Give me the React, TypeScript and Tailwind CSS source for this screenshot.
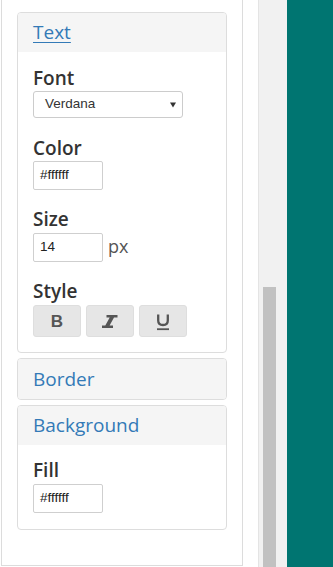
import React from "react";

const label = "block h-[20px] leading-[20px] text-[19px] font-semibold text-[#333] mb-[3px]";
const inputCls =
  "w-[70px] h-[29px] border border-[#cfcfcf] rounded-[2px] bg-white pl-[6px] flex items-center text-[13.5px] text-[#222] font-['Liberation_Sans',Arial,sans-serif]";

function ItalicIcon() {
  return (
    <svg width="16" height="13" viewBox="0 0 16 13" fill="#555">
      <path d="M4.5 0H15.5V2.6H12L7.6 10.4H11V13H0V10.4H3.3L7.7 2.6H4.5Z" />
    </svg>
  );
}

function UnderlineIcon() {
  return (
    <svg width="14" height="17" viewBox="0 0 14 17" fill="none" stroke="#555">
      <path d="M2.2 0.5V6.5Q2.2 11 7 11Q11.8 11 11.8 6.5V0.5" strokeWidth="2.3" />
      <path d="M1 15.2H13" strokeWidth="1.8" />
    </svg>
  );
}

function Header({ title, underline, h }: { title: string; underline?: boolean; h: string }) {
  return (
    <div className={`${h} bg-[#f5f5f5] pl-[15px] text-[19px] text-[#337ab7] rounded-t-[3px]`}>
      <span className={underline ? "underline underline-offset-[3px] decoration-1" : ""}>{title}</span>
    </div>
  );
}

const btn =
  "w-[48px] h-[32px] bg-[#e6e6e6] border border-[#dedede] rounded-[3px] flex items-center justify-center";

export default function App() {
  return (
    <div className="w-[333px] h-[567px] flex overflow-hidden bg-white font-['Open_Sans','Noto_Sans',sans-serif]">
      <div className="w-[259px] h-full border-r border-[#e4e4e4] pl-px">
        <div className="w-[242px] border-x border-b border-[#dcdcdc] pt-[12px] px-[15px] pb-[35px]">
          {/* Text card */}
          <div className="border border-[#dddddd] rounded-[4px]">
            <Header title="Text" underline h="h-[39px] leading-[39px]" />
            <div className="px-[15px] pt-[16px] pb-[15px]">
              <div className="mb-[20px]">
                <span className={label}>Font</span>
                <div className="w-[150px] h-[27px] border border-[#cccccc] rounded-[3px] bg-white flex items-center justify-between pl-[11px] pr-[6px] text-[13.5px] text-[#333] font-['Liberation_Sans',Arial,sans-serif]">
                  <span>Verdana</span>
                  <svg width="6" height="6" viewBox="0 0 6 6" fill="#333">
                    <path d="M0 0.5H6L3 5.5Z" />
                  </svg>
                </div>
              </div>
              <div className="mb-[19px]">
                <span className={label}>Color</span>
                <div className={inputCls}>#ffffff</div>
              </div>
              <div className="mb-[19px]">
                <span className={`${label} mb-[4px]`}>Size</span>
                <div className="flex items-center gap-[5px]">
                  <div className={inputCls}>14</div>
                  <span className="text-[18px] text-[#555] leading-[20px] -mt-[3px]">px</span>
                </div>
              </div>
              <div>
                <span className={`${label} mb-[4px]`}>Style</span>
                <div className="flex gap-[5px]">
                  <div className={btn}>
                    <span className="text-[17px] leading-none font-bold text-[#555] font-['Liberation_Sans',Arial,sans-serif]">B</span>
                  </div>
                  <div className={btn}>
                    <ItalicIcon />
                  </div>
                  <div className={btn}>
                    <span className="mt-[2px] flex">
                      <UnderlineIcon />
                    </span>
                  </div>
                </div>
              </div>
            </div>
          </div>

          {/* Border card */}
          <div className="mt-[5px] border border-[#dddddd] rounded-[4px]">
            <Header title="Border" h="h-[40px] leading-[40px] rounded-b-[3px]" />
          </div>

          {/* Background card */}
          <div className="mt-[5px] border border-[#dddddd] rounded-[4px]">
            <Header title="Background" h="h-[39px] leading-[39px]" />
            <div className="px-[15px] pt-[15px] pb-[16px]">
              <span className={`${label} mb-[4px]`}>Fill</span>
              <div className={inputCls}>#ffffff</div>
            </div>
          </div>
        </div>
      </div>

      {/* scrollbar */}
      <div className="w-[28px] h-full bg-[#f1f1f1] flex flex-col">
        <div className="h-[287px]" />
        <div className="ml-[4px] w-[13px] flex-1 bg-[#c1c1c1]" />
      </div>

      {/* teal area */}
      <div className="flex-1 h-full bg-[#007571]" />
    </div>
  );
}
